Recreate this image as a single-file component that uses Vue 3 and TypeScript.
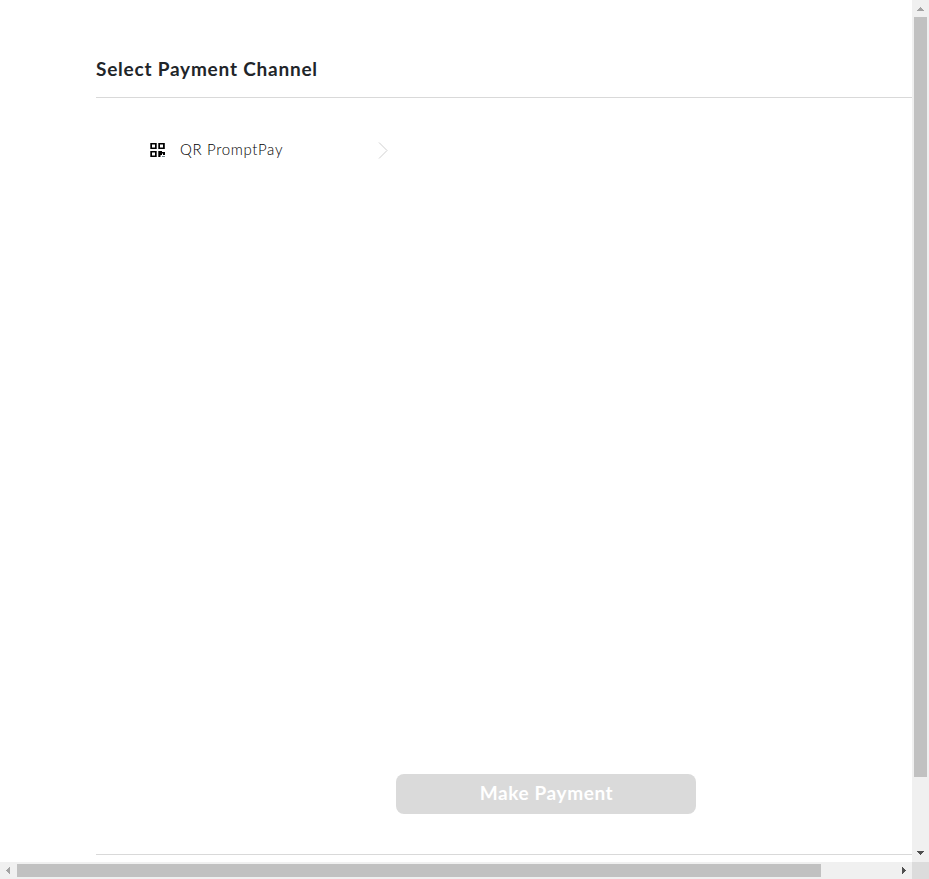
<script setup lang="ts">
const title: string = 'Select Payment Channel'
const channels: string[] = ['QR PromptPay']
</script>

<template>
  <div class="window">
    <main class="page">
      <h1 class="title">{{ title }}</h1>
      <section class="channels">
        <div v-for="channel in channels" :key="channel" class="channel">
          <svg class="qr" width="16" height="16" viewBox="0 0 16 16">
            <path
              fill="#000"
              fill-rule="evenodd"
              d="M.3 1h6.4v6H.3zM2 2.6v2.8h3V2.6zM8.3 1h6.5v6H8.3zM10 2.6v2.8h3V2.6zM.3 9h6.4v6H.3zM2 10.6v2.8h3v-2.8zM8.3 9H12v1h3v3h-2v-1.5h-1V13h-1.5v2H8.3z"
            />
            <path fill="#6b7f8a" d="M12 14h3v1h-3z" />
          </svg>
          <span class="name">{{ channel }}</span>
          <svg class="chevron" width="12" height="18" viewBox="0 0 12 18">
            <path d="M1 1.5L9 9.5L1 17.5" fill="none" stroke="#d0d0d0" stroke-width="1" />
          </svg>
        </div>
      </section>
      <button class="pay" type="button" disabled><span>Make Payment</span></button>
      <div class="rule"></div>
    </main>
    <div class="bar vertical">
      <svg width="17" height="17" shape-rendering="crispEdges"><path fill="#a3a3a3" d="M8 7h1v1h1v1h1v1h1v1H5v-1h1V9h1V8h1z" /></svg>
      <div class="thumb"></div>
      <svg class="end" width="17" height="17" shape-rendering="crispEdges"><path fill="#505050" d="M5 6h7v1h-1v1h-1v1H9v1H8V9H7V8H6V7H5z" /></svg>
    </div>
    <div class="bar horizontal">
      <svg width="17" height="17" shape-rendering="crispEdges"><path fill="#a3a3a3" d="M6 8h1V7h1V6h1V5h1v7H9v-1H8v-1H7V9H6z" /></svg>
      <div class="thumb"></div>
      <svg class="end" width="17" height="17" shape-rendering="crispEdges"><path fill="#505050" d="M7 5h1v1h1v1h1v1h1v1h-1v1H9v1H8v1H7z" /></svg>
    </div>
    <div class="corner"></div>
  </div>
</template>

<style>
body {
  overflow: hidden;
}
</style>

<style scoped>
.window {
  display: grid;
  grid-template: 862px 17px / 912px 17px;
  width: 929px;
  height: 879px;
  background: #fff;
  font-family: "Century Gothic", Lato, sans-serif;
}
.page {
  display: flex;
  flex-direction: column;
  padding: 56px 0 0 96px;
  overflow: hidden;
}
.title {
  margin: 0;
  height: 41px;
  border-bottom: 1px solid #d9d9d9;
  font-size: 19px;
  font-weight: 700;
  line-height: 25px;
  letter-spacing: 0.78px;
  color: #212529;
  white-space: nowrap;
}
.channels {
  height: 676px;
  padding: 34px 0 0 54px;
  box-sizing: border-box;
}
.channel {
  display: flex;
  align-items: center;
  width: 240px;
  height: 36px;
}
.name {
  margin-left: 14px;
  padding-bottom: 2px;
  font-size: 15px;
  font-weight: 300;
  line-height: 20px;
  letter-spacing: 0.65px;
  color: #000;
  white-space: nowrap;
}
.chevron {
  margin-left: auto;
}
.pay {
  display: block;
  width: 300px;
  height: 40px;
  margin: 0 0 40px 300px;
  padding: 0 0 2px 1px;
  border: 0;
  border-radius: 8px;
  background: #dadada;
  color: #fff;
  font: inherit;
  font-size: 19px;
  font-weight: 700;
  line-height: 38px;
  letter-spacing: 0.6px;
}
.rule {
  height: 1px;
  background: #d9d9d9;
}
.bar {
  display: flex;
  background: #f0f0f0;
}
.bar svg {
  display: block;
  flex: none;
}
.vertical {
  flex-direction: column;
}
.vertical .thumb {
  width: 13px;
  height: 760px;
  margin-left: 2px;
  background: #c1c1c1;
}
.horizontal .thumb {
  width: 804px;
  height: 13px;
  margin-top: 2px;
  background: #c1c1c1;
}
.vertical .end {
  margin-top: auto;
}
.horizontal .end {
  margin-left: auto;
}
.corner {
  background: #dcdcdc;
}
</style>
